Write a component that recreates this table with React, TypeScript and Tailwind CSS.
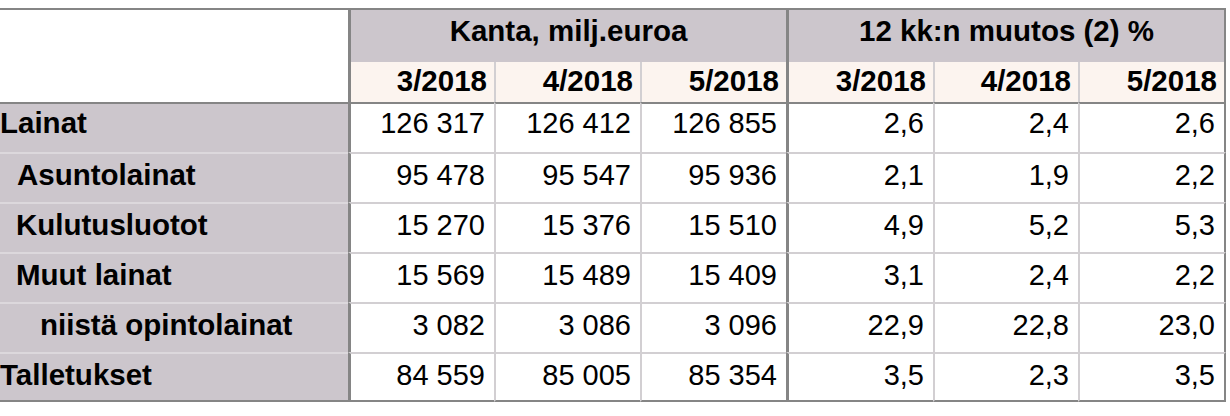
const rows = [
  { label: "Lainat", indent: "pl-0", top: "pt-[3px]", values: ["126 317", "126 412", "126 855", "2,6", "2,4", "2,6"] },
  { label: "Asuntolainat", indent: "pl-[17px]", top: "pt-[5px]", values: ["95 478", "95 547", "95 936", "2,1", "1,9", "2,2"] },
  { label: "Kulutusluotot", indent: "pl-[16px]", top: "pt-[5px]", values: ["15 270", "15 376", "15 510", "4,9", "5,2", "5,3"] },
  { label: "Muut lainat", indent: "pl-[16px]", top: "pt-[5px]", values: ["15 569", "15 489", "15 409", "3,1", "2,4", "2,2"] },
  { label: "niistä opintolainat", indent: "pl-[40px]", top: "pt-[5px]", values: ["3 082", "3 086", "3 096", "22,9", "22,8", "23,0"] },
  { label: "Talletukset", indent: "pl-0", top: "pt-[5px]", values: ["84 559", "85 005", "85 354", "3,5", "2,3", "3,5"] },
];

const months = ["3/2018", "4/2018", "5/2018", "3/2018", "4/2018", "5/2018"];

// left border per data column: thick dark at group starts, thin light otherwise
const colEdge = [
  "border-l-[3px] border-l-[#858585]",
  "border-l-2 border-l-[#d2cfd2]",
  "border-l-2 border-l-[#d2cfd2]",
  "border-l-[3px] border-l-[#858585]",
  "border-l-2 border-l-[#d2cfd2]",
  "border-l-2 border-l-[#d2cfd2] border-r-2 border-r-[#858585]",
];

const App = () => {
  return (
    <div className="min-h-[416px] bg-white pt-[8px] font-['Liberation_Sans',Arial,sans-serif] text-[29px] leading-[32px] text-black">
      <div className="grid w-[1226px] grid-cols-[348px_146px_146px_146px_147px_145px_148px] border-t-2 border-[#858585]">
        {/* Header */}
        <div className="row-span-2 h-[92px] bg-white" />
        <div className="col-span-3 h-[52px] border-l-[3px] border-[#858585] bg-[#ccc6cc] pt-[5px] text-center text-[29.5px] font-bold">
          Kanta, milj.euroa
        </div>
        <div className="col-span-3 h-[52px] border-l-[3px] border-r-2 border-[#858585] bg-[#ccc6cc] pt-[5px] text-center text-[29.5px] font-bold">
          12 kk:n muutos (2) %
        </div>
        {months.map((m, i) => (
          <div
            key={i}
            className={`h-[40px] bg-[#fcf4ef] pt-[3px] pr-[7px] text-right text-[29.5px] font-bold ${colEdge[i]}`}
          >
            {m}
          </div>
        ))}

        {/* Body */}
        {rows.map((row, r) => {
          const first = r === 0;
          const last = r === rows.length - 1;
          const topLine = first ? "border-t-2 border-t-[#858585]" : "border-t-2 border-t-[#d2cfd2]";
          const bottomLine = last ? "border-b-2 border-b-[#858585]" : "";
          return (
            <div key={row.label} className="contents">
              <div
                className={`h-[50px] bg-[#ccc6cc] text-[29.5px] font-bold ${row.indent} ${row.top} ${
                  first ? "border-t-2 border-t-[#858585]" : "border-t-2 border-t-[#dcd8dc]"
                } ${bottomLine}`}
              >
                {row.label}
              </div>
              {row.values.map((v, i) => (
                <div
                  key={i}
                  className={`h-[50px] bg-white pr-[9px] text-right ${row.top} ${topLine} ${bottomLine} ${colEdge[i]}`}
                >
                  {v}
                </div>
              ))}
            </div>
          );
        })}
      </div>
    </div>
  );
};

export default App;
